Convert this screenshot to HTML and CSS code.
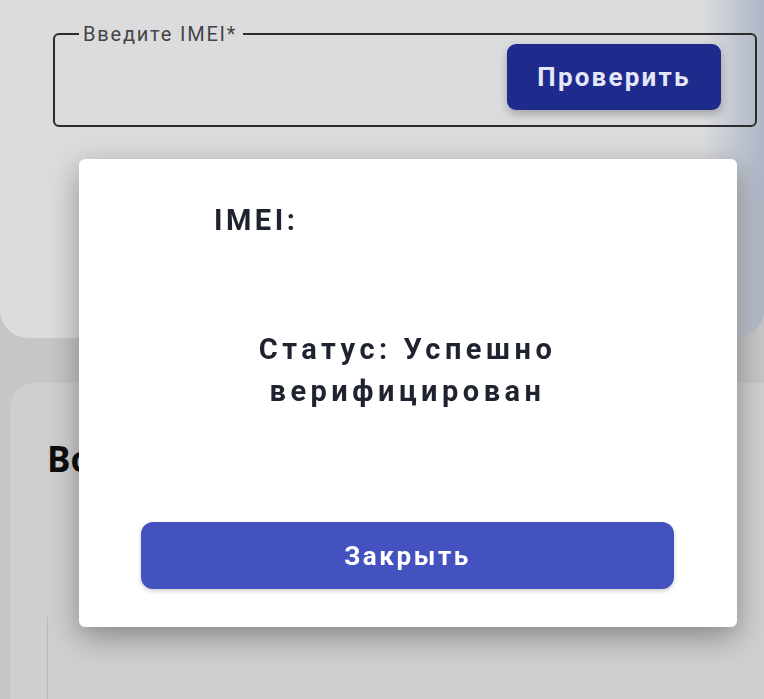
FILE: index.html
```html
<!DOCTYPE html>
<html lang="ru">
<head>
    <meta charset="UTF-8">
    <meta name="viewport" content="width=device-width, initial-scale=1.0">
    <title>Проверка IMEI</title>
    <link rel="stylesheet" href="styles.css">
</head>
<body>

    <div class="page">
        <div class="hero">
            <fieldset class="imei-field">
                <legend>Введите IMEI*</legend>
                <div class="imei-row">
                    <input type="text" class="imei-input" aria-label="IMEI">
                    <button class="btn-check">Проверить</button>
                </div>
            </fieldset>
        </div>

        <div class="section">
            <h2 class="section-title">Вопросы и ответы</h2>
            <div class="faq-item"></div>
        </div>
    </div>

    <div class="overlay">
        <div class="modal">
            <p class="modal-imei">IMEI:</p>
            <p class="modal-status">Статус: Успешно<br>верифицирован</p>
            <button class="btn-close">Закрыть</button>
        </div>
    </div>

</body>
</html>
```

FILE: styles.css
```css
/* Страница проверки IMEI с открытым окном результата */
body {
    margin: 0;
    font-family: Roboto, "Noto Sans", sans-serif;
    background-color: #c6c6c7;
    overflow: hidden;
}
.page {
    height: 699px;
}
.hero {
    height: 338px;
    padding-top: 24px;
    box-sizing: border-box;
    background: linear-gradient(90deg, #dcdcde 0%, #dadbdd 92%, #c4c9d2 96%, #aeb7c6 100%);
    border-radius: 0 0 28px 28px;
}
.imei-field {
    margin: 0 7px 0 53px;
    padding: 0 34px 0 20px;
    height: 103px;
    box-sizing: border-box;
    border: 2px solid #2c2c2e;
    border-radius: 6px;
}
.imei-field legend {
    margin-left: 4px;
    padding: 0 6px 0 4px;
    font-size: 20px;
    line-height: 20px;
    letter-spacing: 1.8px;
    color: #444446;
}
.imei-row {
    display: flex;
    align-items: center;
    height: 80px;
    margin-top: -7px;
}
.imei-input {
    flex: 1;
    border: none;
    background: transparent;
    outline: none;
}
.btn-check {
    width: 214px;
    height: 66px;
    background-color: #1f2b8c;
    color: #e4e7f7;
    border: none;
    border-radius: 9px;
    font-family: Roboto, sans-serif;
    font-size: 26px;
    font-weight: 700;
    letter-spacing: 2.2px;
    box-shadow: 0 4px 8px rgba(0, 0, 0, 0.25);
}
.section {
    margin: 45px 0 0 10px;
    height: 330px;
    padding: 52px 0 0 37px;
    box-sizing: border-box;
    background-color: #cfcfd0;
    border-radius: 24px 0 0 0;
}
.section-title {
    margin: 0;
    font-family: "Open Sans", sans-serif;
    font-size: 35px;
    font-weight: 700;
    color: #0d0d0d;
}
.faq-item {
    margin-top: 135px;
    height: 100px;
    border-left: 1px solid #b9b9ba;
}

/* Окно результата */
.overlay {
    position: fixed;
    inset: 0;
}
.modal {
    position: absolute;
    left: 79px;
    top: 159px;
    width: 658px;
    height: 468px;
    box-sizing: border-box;
    padding: 46px 63px 38px 62px;
    background-color: #fff;
    border-radius: 6px;
    box-shadow: 0 10px 30px rgba(0, 0, 0, 0.35);
    display: flex;
    flex-direction: column;
}
.modal-imei {
    margin: 0 0 93px 73px;
    font-size: 29px;
    line-height: 30px;
    font-weight: 700;
    letter-spacing: 3.5px;
    color: #1f2330;
}
.modal-status {
    margin: 0;
    text-align: center;
    font-size: 29px;
    line-height: 42px;
    font-weight: 700;
    letter-spacing: 4.5px;
    color: #1f2330;
}
.btn-close {
    margin-top: auto;
    height: 67px;
    background-color: #4452c0;
    color: #fff;
    border: none;
    border-radius: 12px;
    font-family: Roboto, sans-serif;
    font-size: 26px;
    font-weight: 700;
    letter-spacing: 2.6px;
    box-shadow: 0 2px 4px rgba(0, 0, 0, 0.2);
}
```
